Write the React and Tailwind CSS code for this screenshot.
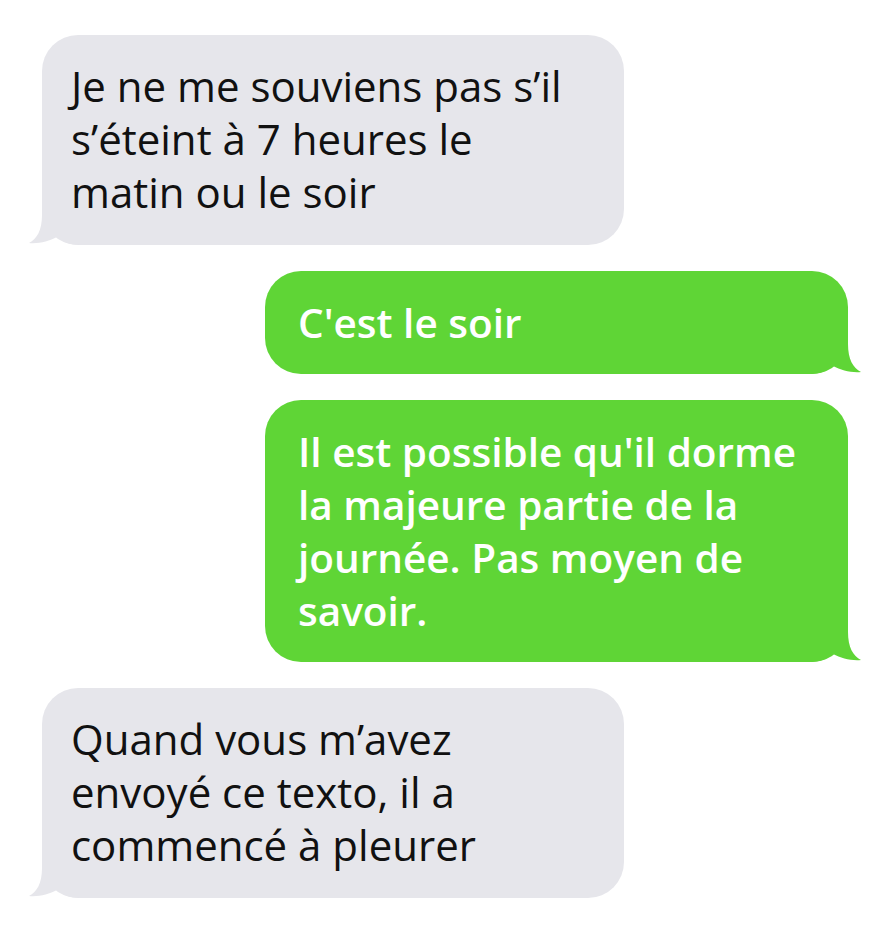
import React from 'react';

const messages = [
  { from: 'them', lines: ['Je ne me souviens pas s’il', 's’éteint à 7 heures le', 'matin ou le soir'] },
  { from: 'me', lines: ["C'est le soir"] },
  { from: 'me', lines: ["Il est possible qu'il dorme", 'la majeure partie de la', 'journée. Pas moyen de', 'savoir.'] },
  { from: 'them', lines: ['Quand vous m’avez', 'envoyé ce texto, il a', 'commencé à pleurer'] },
];

const Tail = ({ side, color }) => (
  <svg
    width="50"
    height="45"
    viewBox="0 0 50 45"
    className={side === 'left' ? 'absolute left-[-13px] bottom-0' : 'absolute right-[-13px] bottom-0 -scale-x-100'}
  >
    <path d="M13 0 L13 15 C13 30 8 39 0 43 C10 44 20 41 28 37 C34 42 42 45 50 45 L50 0 Z" fill={color} />
  </svg>
);

const Bubble = ({ from, lines }) => {
  const mine = from === 'me';
  return (
    <div className={mine ? 'flex justify-end' : 'flex justify-start'}>
      <div
        className={
          mine
            ? 'relative w-[583px] rounded-[36px] bg-[#5fd536] px-[33px] py-[25px] text-white font-semibold text-[40.5px]'
            : 'relative w-[582px] rounded-[36px] bg-[#e6e6eb] px-[29px] pt-[24px] pb-[27px] text-[#111] text-[42px]'
        }
      >
        <Tail side={mine ? 'right' : 'left'} color={mine ? '#5fd536' : '#e6e6eb'} />
        <div className="relative leading-[53px]">
          {lines.map((l, i) => (
            <div key={i} className="whitespace-nowrap">{l}</div>
          ))}
        </div>
      </div>
    </div>
  );
};

export default function App() {
  return (
    <div className="w-[890px] h-[938px] bg-white pt-[35px] px-[42px] font-['Open_Sans',sans-serif]">
      <div className="flex flex-col gap-[26px]">
        {messages.map((m, i) => (
          <Bubble key={i} {...m} />
        ))}
      </div>
    </div>
  );
}
